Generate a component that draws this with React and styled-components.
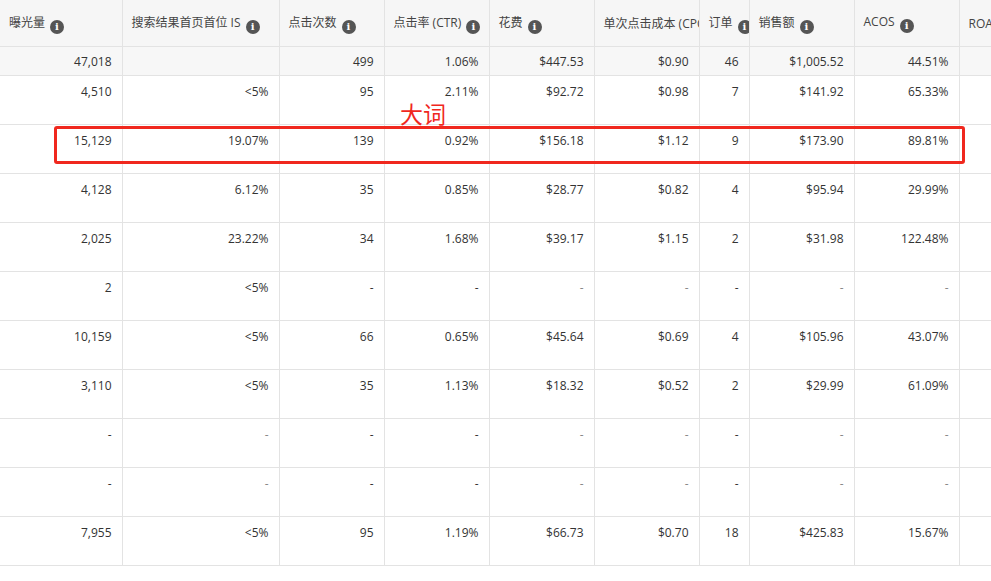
import React from "react";
import styled, { createGlobalStyle } from "styled-components";

const G = createGlobalStyle`
  body{margin:0;background:#fff;font-family:"Open Sans","Noto Sans CJK SC",sans-serif;overflow:hidden;}
`;
const Wrap = styled.div`position:relative;width:991px;height:581px;overflow:hidden;`;
const Table = styled.table`
  border-collapse:collapse;table-layout:fixed;width:1100px;font-size:12px;color:#333;
  td,th{border:1px solid #e3e3e3;white-space:nowrap;overflow:hidden;}
  tr > :first-child{border-left:none;}
`;
const Th = styled.th`
  height:46px;background:#f6f6f6;text-align:left;font-weight:400;color:#444;padding:0 0 0 9px;
  border-top:none !important;text-overflow:clip;
`;
const Td = styled.td`
  height:${p=>p.$sum?"29px":"49px"};text-align:right;padding:${p=>p.$sum?"0 10px 0 0":"7px 10px 0 0"};
  vertical-align:${p=>p.$sum?"middle":"top"};box-sizing:border-box;
  background:${p=>p.$sum?"#f7f7f7":"#fff"};
  color:${p=>p.$dim?"#888":"#333"};
`;
const Info = styled.span`
  display:inline-block;width:14px;height:14px;border-radius:50%;background:#555;color:#fff;
  font:bold 10px/14px "DejaVu Serif",serif;text-align:center;vertical-align:-3px;margin-left:5px;
`;
const Box = styled.div`
  position:absolute;left:54px;top:126px;width:905px;height:32px;border:3px solid #f0281e;border-radius:3px;
`;
const Label = styled.div`
  position:absolute;left:400px;top:99px;color:#f0281e;font-size:23px;font-family:"Noto Sans CJK SC",sans-serif;line-height:28px;
`;

const widths=[122,157,105,105,105,105,50,105,105,141];
const heads=[["曝光量",1],["搜索结果首页首位 IS",1],["点击次数",1],["点击率 (CTR)",1],["花费",1],["单次点击成本 (CPC)",0],["订单",1],["销售额",1],["ACOS",1],["ROAS",0]];
const sum=["47,018","","499","1.06%","$447.53","$0.90","46","$1,005.52","44.51%",""];
const rows=[
["4,510","<5%","95","2.11%","$92.72","$0.98","7","$141.92","65.33%"],
["15,129","19.07%","139","0.92%","$156.18","$1.12","9","$173.90","89.81%"],
["4,128","6.12%","35","0.85%","$28.77","$0.82","4","$95.94","29.99%"],
["2,025","23.22%","34","1.68%","$39.17","$1.15","2","$31.98","122.48%"],
["2","<5%","-","-","-","-","-","-","-"],
["10,159","<5%","66","0.65%","$45.64","$0.69","4","$105.96","43.07%"],
["3,110","<5%","35","1.13%","$18.32","$0.52","2","$29.99","61.09%"],
["-","-","-","-","-","-","-","-","-"],
["-","-","-","-","-","-","-","-","-"],
["7,955","<5%","95","1.19%","$66.73","$0.70","18","$425.83","15.67%"],
];
const dimCols=[1,4,5,7,8];

export default function App(){
  return <Wrap><G/>
    <Table>
      <colgroup>{widths.map((w,i)=><col key={i} style={{width:w}}/>)}</colgroup>
      <thead><tr>{heads.map(([h,i],k)=><Th key={k}>{h}{i?<Info>i</Info>:null}</Th>)}</tr></thead>
      <tbody>
        <tr>{sum.map((v,k)=><Td $sum key={k}>{v}</Td>)}</tr>
        {rows.map((r,i)=><tr key={i}>{[...r,""].map((v,k)=><Td key={k} $dim={v==="-"&&dimCols.includes(k)}>{v}</Td>)}</tr>)}
      </tbody>
    </Table>
    <Label>大词</Label>
    <Box/>
  </Wrap>;
}
